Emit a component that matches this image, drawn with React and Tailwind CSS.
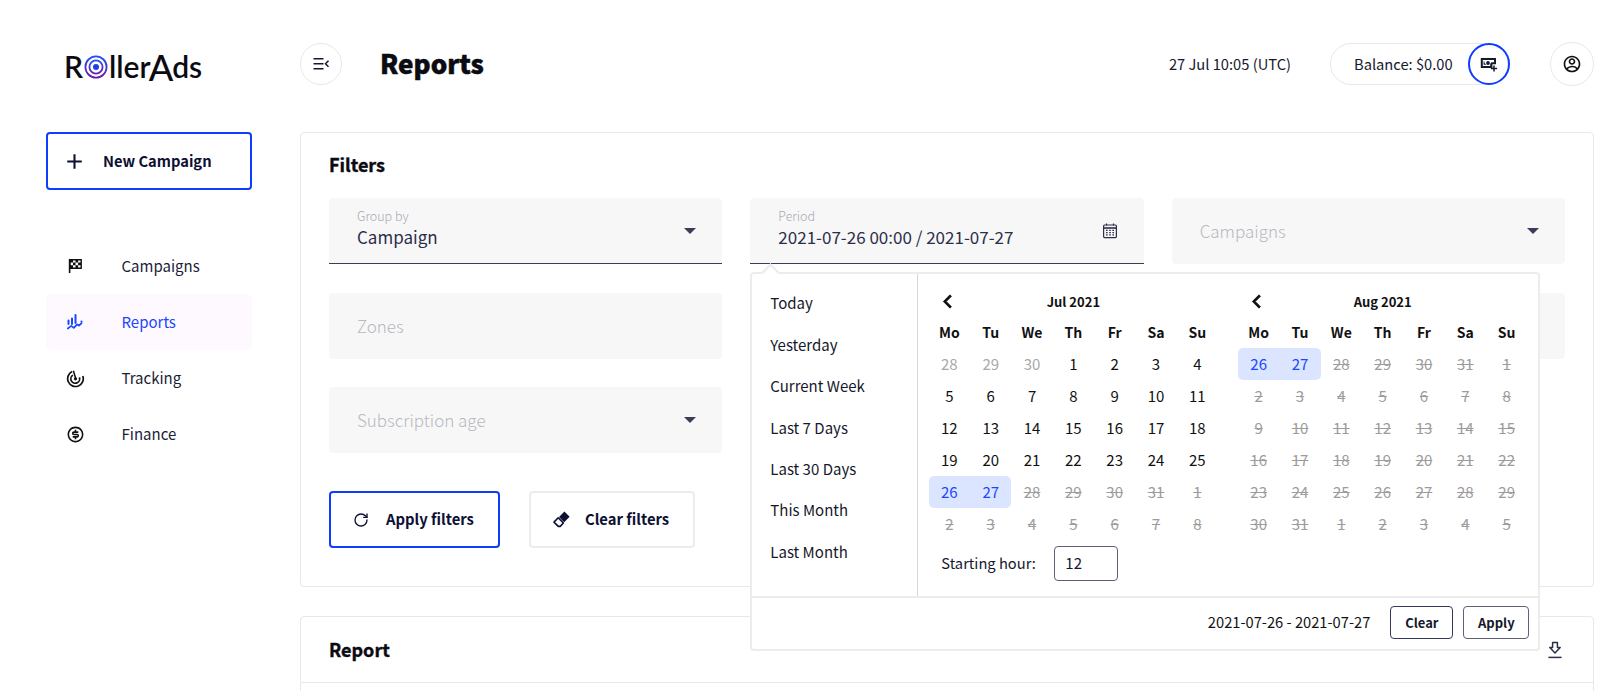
import { RiAddLine, RiArrowLeftSLine, RiAccountCircleLine, RiMoneyDollarCircleLine } from 'react-icons/ri';
import { RotateCw } from 'lucide-react';

const font = "font-['Noto_Sans_CJK_JP','Source_Sans_Pro',sans-serif]";

const presets = ['Today', 'Yesterday', 'Current Week', 'Last 7 Days', 'Last 30 Days', 'This Month', 'Last Month'];
const weekdays = ['Mo', 'Tu', 'We', 'Th', 'Fr', 'Sa', 'Su'];

// kind: m = muted, n = normal, s = selected, x = struck out
const julDays = [
  ...[28, 29, 30].map((d) => [d, 'm']),
  ...Array.from({ length: 25 }, (_, i) => [i + 1, 'n']),
  [26, 's'], [27, 's'],
  ...[28, 29, 30, 31, 1, 2, 3, 4, 5, 6, 7, 8].map((d) => [d, 'x']),
];
const augDays = [
  [26, 's'], [27, 's'],
  ...[28, 29, 30, 31].map((d) => [d, 'x']),
  ...Array.from({ length: 31 }, (_, i) => [i + 1, 'x']),
  ...[1, 2, 3, 4, 5].map((d) => [d, 'x']),
];

function Logo() {
  return (
    <div className="flex items-center h-[42px] font-['Lato',sans-serif] text-[30px] font-semibold text-[#0b0b12] leading-none">
      <span>R</span>
      <svg width="24" height="24" viewBox="0 0 24 24" className="mx-[1px] mt-[2px]">
        <defs>
          <linearGradient id="lg" x1="0" y1="0" x2="0" y2="1">
            <stop offset="0" stopColor="#2450f5" />
            <stop offset="1" stopColor="#6a1fa8" />
          </linearGradient>
        </defs>
        <circle cx="12" cy="12" r="10.6" fill="none" stroke="url(#lg)" strokeWidth="1.8" />
        <circle cx="12" cy="12" r="6.6" fill="none" stroke="url(#lg)" strokeWidth="1.8" />
        <circle cx="12" cy="12" r="3" fill="#1f3cf0" />
      </svg>
      <span>ller</span>
      <span className="text-[36px] font-medium -ml-[2px] -mr-[1px] translate-y-[1px]">A</span>
      <span>ds</span>
    </div>
  );
}

function FlagIcon() {
  return (
    <svg width="18" height="18" viewBox="0 0 18 18">
      <path d="M3.6 2v14" stroke="#111" strokeWidth="1.6" />
      <path d="M4 2.8h11.2v8.4H4z" fill="#fff" stroke="#111" strokeWidth="1.4" />
      <path d="M4 3h3v2.6H4zM9.5 3h2.6v2.6H9.5zM7 5.6h2.5v2.6H7zM12.1 5.6H15v2.6h-2.9zM4 8.2h3V11H4zM9.5 8.2h2.6V11H9.5z" fill="#111" />
    </svg>
  );
}

function ChartIcon() {
  return (
    <svg width="18" height="18" viewBox="0 0 18 18" fill="none" stroke="#1a47ff" strokeWidth="2" strokeLinecap="round" strokeLinejoin="round">
      <path d="M2.5 7.5v3.5M6 5.5v5.5M9.5 2v8M15.5 8.5v.2" />
      <path d="M1.8 15.5l3.4-2.6 2.6 2 3.4-3.6 1.8 1.4 2.6-2.6" strokeWidth="1.7" />
    </svg>
  );
}

function RadarIcon() {
  return (
    <svg width="19" height="19" viewBox="0 0 19 19" fill="none" stroke="#111" strokeWidth="1.7">
      <path d="M6.2 2.6A7.8 7.8 0 1 0 16.8 7" />
      <path d="M6.9 6.1A4.4 4.4 0 1 0 13.4 8.4" />
      <circle cx="9.5" cy="9.8" r="1.6" fill="#111" stroke="none" />
      <path d="M7.4 1.8L9.7 9.5" strokeWidth="1.5" />
    </svg>
  );
}

function EraserIcon() {
  return (
    <svg width="19" height="19" viewBox="0 0 19 19">
      <path d="M12.4 1.6l5.2 5.2-5.4 5.4-5.2-5.2z" fill="#0c1033" />
      <path d="M6.2 7.8l5.2 5.2-3.2 3.4H6.3L2 12.1z" fill="#fff" stroke="#0c1033" strokeWidth="1.6" strokeLinejoin="round" />
    </svg>
  );
}

function DownloadIcon() {
  return (
    <svg width="16" height="18" viewBox="0 0 16 18" fill="none" stroke="#2b2f4a" strokeWidth="1.5">
      <path d="M5.6 1.5h4.8v5h2.8L8 12 2.8 6.5h2.8z" strokeLinejoin="round" />
      <path d="M1.4 16.4h13.2" />
    </svg>
  );
}

function MenuIcon() {
  return (
    <svg width="18" height="18" viewBox="0 0 18 18" fill="none" stroke="#16182c" strokeWidth="1.5">
      <path d="M1.5 3.8h10M1.5 8.8h10M1.5 13.8h10" />
      <path d="M16.5 5.8L13.5 8.8l3 3" />
    </svg>
  );
}

function CashPlusIcon() {
  return (
    <svg width="18" height="18" viewBox="0 0 18 18" fill="none">
      <path d="M0.8 3h15.2v6.2h-3.6v3.8H0.8z" fill="#16182c" />
      <path d="M2.8 5h11.2v2.2h-2.6a3 3 0 0 0-1 3.8H2.8z" fill="#fff" />
      <path d="M4.2 6.2a3.6 3.6 0 0 0 2.2 3.6H3.6V6.2z" fill="#16182c" />
      <circle cx="8" cy="8" r="1.9" fill="#16182c" />
      <path d="M14 10.4v6.2M10.9 13.5h6.2" stroke="#16182c" strokeWidth="1.5" />
    </svg>
  );
}

function CalendarIcon() {
  return (
    <svg width="16" height="18" viewBox="0 0 16 18" fill="none" stroke="#2b2f4a" strokeWidth="1.2">
      <rect x="1.6" y="3" width="12.8" height="12.6" rx="1" />
      <path d="M1.6 6h12.8" strokeWidth="1.6" />
      <path d="M4.5 1.4V3.4M11.5 1.4V3.4" />
      <path d="M4 8.4h1.6M7.2 8.4h1.6M10.4 8.4H12M4 10.6h1.6M7.2 10.6h1.6M10.4 10.6H12M4 12.8h1.6M7.2 12.8h1.6M10.4 12.8H12" strokeWidth="1.3" />
    </svg>
  );
}

function Caret() {
  return <span className="w-0 h-0 border-x-[6px] border-x-transparent border-t-[6px] border-t-[#3a3d56]" />;
}

function NavItem({ icon, label, active }) {
  return (
    <div className={`flex items-center h-[56px] rounded-[6px] ${active ? 'bg-[#fdf9ff] text-[#1a47ff]' : 'text-[#1a1d36]'}`}>
      <span className="w-[75.5px] pl-[20px] flex items-center">{icon}</span>
      <span className="text-[15px] leading-none -translate-y-[1px]">{label}</span>
    </div>
  );
}

function Field({ label, value, placeholder, caret, calendar, underline, children }) {
  return (
    <div className="relative">
      <div className={`h-[66px] rounded-t-[4px] bg-[#f7f7f8] pl-[28px] pr-[26px] flex items-center justify-between ${underline ? 'border-b border-[#3a3d56]' : 'rounded-b-[4px]'}`}>
        <div className={`flex flex-col justify-center ${label ? 'pb-[5px]' : ''}`}>
          {label && <span className="text-[12.5px] leading-[16px] font-light text-[#a9a9b2]">{label}</span>}
          {value && <span className="text-[17px] leading-[24px] mt-[1px] text-[#2b2f4a]">{value}</span>}
          {placeholder && <span className="text-[17px] leading-[24px] font-light text-[#b8b8c0]">{placeholder}</span>}
        </div>
        {caret && <Caret />}
        {calendar && <CalendarIcon />}
      </div>
      {children}
    </div>
  );
}

function Month({ title, days }) {
  return (
    <div className="w-[289.3px]">
      <div className="relative flex items-center justify-center h-[29px]">
        <RiArrowLeftSLine className="absolute left-[6px] top-[2px] text-[25px] text-[#111] stroke-[0.8px]" />
        <span className="text-[13px] font-bold text-[#111]">{title}</span>
      </div>
      <div className="grid grid-cols-7">
        {weekdays.map((d) => (
          <div key={d} className="h-[32px] flex items-center justify-center text-[14px] font-bold text-[#111]">{d}</div>
        ))}
        {days.map(([d, kind], i) => (
          <div
            key={i}
            className={`h-[32px] flex items-center justify-center text-[15px] ${
              kind === 'n' ? 'text-[#111]' : ''
            } ${kind === 'm' ? 'text-[#a8a8a8]' : ''} ${kind === 'x' ? 'text-[#9c9c9c] line-through' : ''} ${
              kind === 's' ? 'bg-[#dce5ff] text-[#1a47ff]' : ''
            } ${kind === 's' && d === 26 ? 'rounded-l-[5px]' : ''} ${kind === 's' && d === 27 ? 'rounded-r-[5px]' : ''}`}
          >
            {d}
          </div>
        ))}
      </div>
    </div>
  );
}

function DatePopup() {
  return (
    <div className="absolute left-0 top-[74px] z-10 w-[790px] h-[379px] bg-white border-2 border-[#ececec] rounded-[4px] flex flex-col">
      <span className="absolute left-[12px] top-[-8px] w-[13px] h-[13px] rotate-45 bg-white border-l-2 border-t-2 border-[#ececec]" />
      <div className="flex h-[324px] border-b-2 border-[#ececec]">
        <div className="w-[166px] border-r border-[#d8d8d8] pl-[18px] pt-[9px]">
          {presets.map((p) => (
            <div key={p} className="h-[41.4px] flex items-center text-[15px] text-[#16182c]">{p}</div>
          ))}
        </div>
        <div className="relative flex-1 pl-[10.4px] pt-[13px]">
          <div className="flex gap-[20px]">
            <Month title="Jul 2021" days={julDays} />
            <Month title="Aug 2021" days={augDays} />
          </div>
          <div className="absolute left-[23px] top-[272px] flex items-center">
            <span className="text-[14.7px] text-[#16182c] w-[113px]">Starting hour:</span>
            <span className="w-[64px] h-[35px] border border-[#5c6079] rounded-[4px] pl-[10px] flex items-center text-[15px] text-[#16182c]">12</span>
          </div>
        </div>
      </div>
      <div className="flex-1 flex items-center justify-end pr-[9px] pb-[2px]">
        <span className="text-[14.7px] text-[#111] mr-[20px]">2021-07-26 - 2021-07-27</span>
        <span className="w-[63px] h-[33px] border border-[#33395c] rounded-[4px] flex items-center justify-center text-[13px] font-bold text-[#16182c]">Clear</span>
        <span className="w-[66px] h-[33px] ml-[10px] border border-[#5c6079] rounded-[4px] flex items-center justify-center text-[13px] font-bold text-[#16182c]">Apply</span>
      </div>
    </div>
  );
}

export default function App() {
  return (
    <div className={`h-screen w-full overflow-hidden bg-white flex ${font}`}>
      <aside className="w-[300px] shrink-0 pl-[46px] pr-[48px]">
        <div className="h-[132px] pt-[45px] pl-[18px]">
          <Logo />
        </div>
        <div className="h-[58px] border-2 border-[#0f3dff] rounded-[4px] flex items-center text-[#0c1033]">
          <RiAddLine className="ml-[14px] text-[25px]" />
          <span className="ml-[16px] text-[14.7px] font-bold">New Campaign</span>
        </div>
        <nav className="mt-[48px]">
          <NavItem icon={<FlagIcon />} label="Campaigns" />
          <NavItem icon={<ChartIcon />} label="Reports" active />
          <NavItem icon={<RadarIcon />} label="Tracking" />
          <NavItem icon={<RiMoneyDollarCircleLine className="text-[19px] text-[#111]" />} label="Finance" />
        </nav>
      </aside>

      <main className="flex-1 pr-[6px]">
        <header className="h-[132px] pt-[43px] flex items-start">
          <button className="w-[42px] h-[42px] rounded-full border border-[#e8e8e8] flex items-center justify-center">
            <MenuIcon />
          </button>
          <h1 className="ml-[38px] text-[26px] leading-[40px] font-black text-[#0b0b12] [-webkit-text-stroke:0.5px_#0b0b12]">Reports</h1>
          <div className="ml-auto -mt-px flex items-center">
            <span className="text-[14.7px] text-[#16182c]">27 Jul 10:05 (UTC)</span>
            <div className="ml-[39px] w-[180px] h-[42px] rounded-full border border-[#e8e8e8] flex items-center justify-between pl-[23px]">
              <span className="text-[14.7px] text-[#16182c]">Balance: $0.00</span>
              <span className="w-[42px] h-[42px] -mr-px rounded-full border-2 border-[#0f3dff] flex items-center justify-center">
                <CashPlusIcon />
              </span>
            </div>
            <span className="ml-[40px] w-[44px] h-[44px] rounded-full border border-[#e8e8e8] flex items-center justify-center">
              <RiAccountCircleLine className="text-[20px] text-[#111]" />
            </span>
          </div>
        </header>

        <section className="h-[455px] border border-[#e8e8e8] rounded-[4px] px-[28px] pt-[18px]">
          <h2 className="text-[18px] leading-[26px] font-bold text-[#0b0b12] [-webkit-text-stroke:0.4px_#0b0b12]">Filters</h2>
          <div className="mt-[21px] grid grid-cols-3 gap-x-[28px] gap-y-[28.5px]">
            <Field label="Group by" value="Campaign" caret underline />
            <Field label="Period" value="2021-07-26 00:00 / 2021-07-27" calendar underline>
              <DatePopup />
            </Field>
            <Field placeholder="Campaigns" caret />
            <Field placeholder="Zones" />
            <Field />
            <Field />
            <Field placeholder="Subscription age" caret />
          </div>
          <div className="mt-[38px] flex gap-[29px]">
            <button className="w-[171px] h-[57px] border-2 border-[#0f3dff] rounded-[4px] flex items-center text-[#0c1033]">
              <RotateCw size={16} strokeWidth={2} className="ml-[22px]" />
              <span className="ml-[17px] text-[14.8px] font-bold">Apply filters</span>
            </button>
            <button className="w-[166px] h-[57px] border-2 border-[#ececec] rounded-[4px] flex items-center text-[#0c1033]">
              <span className="ml-[21px]"><EraserIcon /></span>
              <span className="ml-[14px] text-[14.8px] font-bold">Clear filters</span>
            </button>
          </div>
        </section>

        <section className="mt-[29px] h-[120px] border border-[#e8e8e8] rounded-[4px]">
          <div className="h-[66px] px-[28px] flex items-center justify-between border-b border-[#e8e8e8]">
            <h2 className="text-[18px] font-bold text-[#0b0b12] [-webkit-text-stroke:0.4px_#0b0b12]">Report</h2>
            <span className="mr-[2px]"><DownloadIcon /></span>
          </div>
        </section>
      </main>
    </div>
  );
}
